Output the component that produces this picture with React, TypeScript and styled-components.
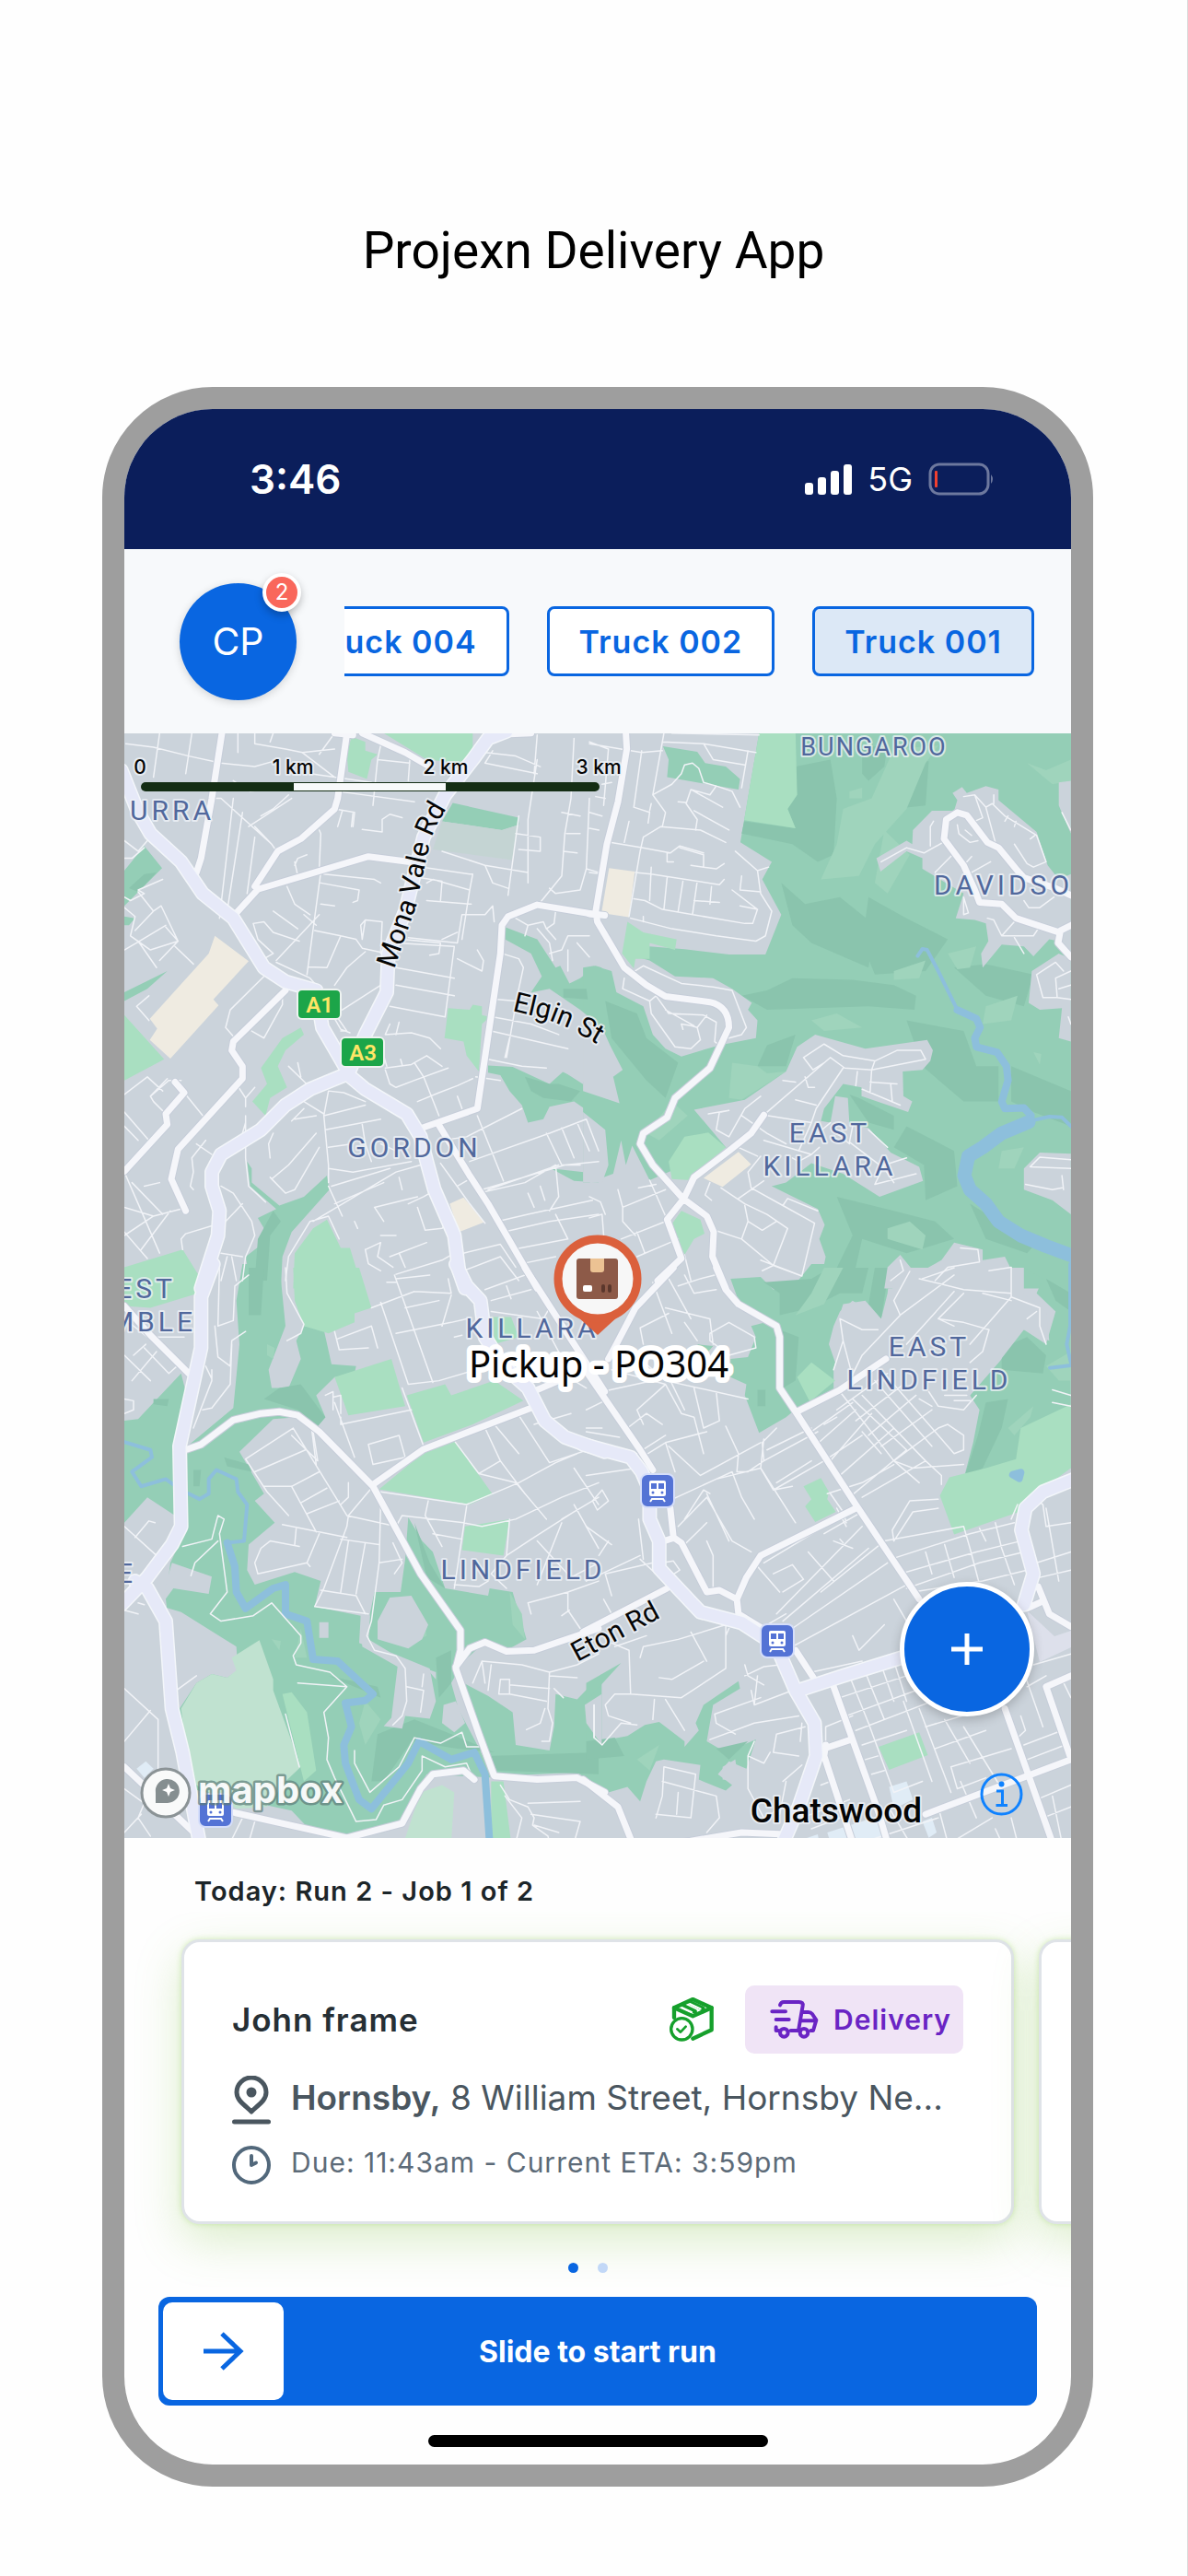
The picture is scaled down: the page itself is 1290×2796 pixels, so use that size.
import React, { useState } from "react";
import styled, { createGlobalStyle } from "styled-components";

const blue = "#0966e1";
const ui = `Inter, "Liberation Sans", sans-serif`;
const mapFont = `Roboto, "Liberation Sans", sans-serif`;

const GlobalStyle = createGlobalStyle`
  *, *::before, *::after { box-sizing: border-box; }
  body { margin: 0; background: #fefefe; font-family: ${ui}; }
  button { font: inherit; border: 0; padding: 0; margin: 0; cursor: pointer; }
  h1, h2, p { margin: 0; }
`;

const Page = styled.main`
  min-height: 100vh;
  padding: 232px 0 96px;
  border-right: 1px solid #dcdcdc;
  display: flex;
  flex-direction: column;
  gap: 108px;
`;

const Title = styled.h1`
  font-family: Roboto, "Liberation Sans", sans-serif;
  font-weight: 400;
  font-size: 55px;
  line-height: 80px;
  text-align: center;
  color: #000;
`;

const Phone = styled.section`
  margin: 0 102px 0 111px;
  border: 24px solid #9e9e9e;
  border-radius: 120px;
  overflow: hidden;
  background: #fefefe;
`;

const StatusBar = styled.div`
  height: 152px;
  padding: 0 82px 0 136px;
  background: #0b1e5b;
  color: #fff;
  display: flex;
  align-items: center;
  justify-content: space-between;
`;

const Clock = styled.span`
  font-size: 44px;
  font-weight: 600;
`;

const Signals = styled.div`
  display: flex;
  align-items: center;
  gap: 17px;
  font-size: 36px;
`;

const Header = styled.header`
  height: 200px;
  padding: 0 40px 0 60px;
  background: #f7f9fb;
  display: flex;
  align-items: center;
  gap: 52px;
`;

const AvatarButton = styled.button`
  position: relative;
  flex: none;
  width: 127px;
  height: 127px;
  border-radius: 50%;
  background: ${blue};
  color: #fff;
  font-size: 41px;
  box-shadow: 0 2px 10px rgba(0, 0, 0, 0.16);
`;

const Badge = styled.span`
  position: absolute;
  top: -11px;
  right: -5px;
  width: 42px;
  height: 42px;
  border: 4px solid #fff;
  border-radius: 50%;
  background: #f9675b;
  font-size: 24px;
  line-height: 34px;
  text-align: center;
  box-shadow: 0 4px 8px rgba(0, 0, 0, 0.25);
`;

const TruckStrip = styled.nav`
  flex: 1;
  min-width: 0;
  overflow: hidden;
  display: flex;
  justify-content: flex-end;
  gap: 41px;
`;

const TruckButton = styled.button<{ $selected: boolean }>`
  flex: none;
  height: 76px;
  padding: 0 32px;
  border: 3px solid ${blue};
  border-radius: 8px;
  background: ${(p) => (p.$selected ? "#dce8f6" : "#fff")};
  color: ${blue};
  font-size: 34px;
  font-weight: 600;
  letter-spacing: 1px;
  white-space: nowrap;
`;

const MapPane = styled.div`
  position: relative;
  background: #cbd3db;
`;

const MapSvg = styled.svg`
  display: block;
  width: 100%;
  height: auto;
`;

const AddButton = styled.button`
  position: absolute;
  right: 40px;
  bottom: 132px;
  width: 146px;
  height: 146px;
  border: 5px solid #fff;
  border-radius: 50%;
  background: ${blue};
  display: grid;
  place-items: center;
  box-shadow: 0 4px 12px rgba(0, 0, 0, 0.2);
`;

const InfoButton = styled.button`
  position: absolute;
  right: 52px;
  bottom: 24px;
  width: 47px;
  height: 47px;
  background: none;
`;

const Sheet = styled.section`
  padding: 36px 0 19px;
`;

const RunTitle = styled.h2`
  padding: 0 76px;
  font-size: 29px;
  line-height: 44px;
  font-weight: 600;
  letter-spacing: 1px;
  color: #1c2529;
`;

const Jobs = styled.div`
  display: flex;
  gap: 27px;
  overflow: hidden;
  padding: 30px 62px 68px;
`;

const JobCard = styled.article`
  flex: none;
  width: 100%;
  height: 309px;
  padding: 47px 52px 0;
  border: 3px solid #dfe3e8;
  border-radius: 20px;
  background: #fff;
  display: flex;
  flex-direction: column;
  box-shadow: 0 18px 50px rgba(130, 195, 70, 0.28), 0 0 6px rgba(150, 210, 90, 0.4);
`;

const CardTop = styled.div`
  display: flex;
  align-items: center;
  height: 74px;
`;

const Customer = styled.h2`
  flex: 1;
  font-size: 35px;
  font-weight: 600;
  letter-spacing: 1px;
  color: #262f35;
`;

const DeliveryTag = styled.span`
  display: flex;
  align-items: center;
  gap: 16px;
  height: 74px;
  margin-left: 34px;
  padding: 0 13px 0 27px;
  border-radius: 10px;
  background: #f0e4f6;
  color: #6a24c4;
  font-size: 30px;
  font-weight: 600;
  letter-spacing: 1px;
`;

const InfoRow = styled.div<{ $height: number; $color: string; $size: number }>`
  display: flex;
  align-items: center;
  gap: 22px;
  height: ${(p) => p.$height}px;
  color: ${(p) => p.$color};
  font-size: ${(p) => p.$size}px;
  letter-spacing: ${(p) => (p.$size > 32 ? 0 : 1)}px;
  white-space: nowrap;

  b { font-weight: 600; }
  p { padding-bottom: 6px; }
  svg { flex: none; }
`;

const Pager = styled.div`
  display: flex;
  justify-content: center;
  gap: 21px;
  margin-top: -26px;
  padding-right: 22px;
`;

const PagerDot = styled.button<{ $active: boolean }>`
  width: 11px;
  height: 11px;
  border-radius: 50%;
  background: ${(p) => (p.$active ? blue : "#c2d8f7")};
`;

const SlideControl = styled.label`
  display: grid;
  align-items: center;
  margin: 26px 37px 32px;
  height: 118px;
  border-radius: 12px;
  background: ${blue};

  & > * { grid-area: 1 / 1; }
`;

const SlideText = styled.span`
  justify-self: center;
  color: #fff;
  font-size: 32px;
  font-weight: 700;
`;

const SlideInput = styled.input`
  appearance: none;
  width: 100%;
  height: 118px;
  margin: 0;
  padding: 6px 5px;
  background: transparent;
  cursor: pointer;

  &::-webkit-slider-runnable-track { height: 106px; }
  &::-webkit-slider-thumb {
    appearance: none;
    width: 131px;
    height: 106px;
    border-radius: 10px;
    background: #fff;
  }
`;

const SlideArrow = styled.svg`
  margin-left: 48px;
  pointer-events: none;
`;

const HomeIndicator = styled.div`
  width: 369px;
  height: 13px;
  margin: 0 auto;
  border-radius: 7px;
  background: #000;
`;

/* ---------- map data: the area is split in four tiles, each with its own grid ---------- */

type Tile = "nw" | "ne" | "sw" | "se";
type Shapes = Record<Tile, string>;

const tileTransform: Record<Tile, string> = {
  nw: "translate(-5 -6) scale(.33333 .38265)",
  ne: "translate(505 -6) scale(.34439 .38265)",
  sw: "translate(-5 584) scale(.33333 .39541)",
  se: "translate(505 584) scale(.34439 .39541)",
};
const tiles: Tile[] = ["nw", "ne", "sw", "se"];

const forest: Shapes = {
  nw: `M15 405L80 335 138 398 15 505ZM1255 565L1360 600 1420 680 1435 675 1465 725 1500 710 1550 675 1570 680V860L1500 830 1420 770 1340 750 1375 705 1340 640 1255 600Z
    M1200 958L1280 962 1400 1010 1445 975 1570 1045V1115L1530 1090 1480 1060 1400 1075 1380 1110 1330 1120 1310 1070 1270 1030 1240 985 1200 978Z
    M415 1230L430 1250 430 1290 520 1355 600 1330 675 1270 683 1310 560 1430 530 1500 525 1590H430L410 1500 455 1470 470 1420 450 1390 510 1365 425 1300Z
    M1405 1250L1560 1265V1290L1480 1285ZM1085 213L1300 255V275L1245 290 1050 265ZM15 750L155 690 90 740 15 775ZM15 535L50 540 30 560 15 560Z`,
  ne: `M535 15H1530V1590H725L745 1500 725 1450 742 1410 720 1365 575 1300 575 1265 430 1190 190 1283 135 1185 115 1240 100 1170 75 1265 0 1290-20 1290V680L15 675 70 690 85 750 120 690 190 620 300 628 440 643H555L605 530 545 430 575 380 476 325Z
    M232 52L340 68 365 100 430 110 475 145 470 175 245 140 250 90Z`,
  sw: `M15 410L60 405 200 280 215 330 180 480 180 670 90 620 15 690Z
    M220 480L370 375 390 200 380 80 400-20H520L540 150 485 270 495 320 550 320 590 240 575 190 600 150 665 160 690 255 770 260 765 280 700 290 640 340 670 400 640 430 580 400 500 405 390 495 470 610 440 630 505 690 420 750 415 820 440 860 570 825 655 850 635 920 785 945 780 1020 900 1065 1010 1100 1090 1180 1140 1260 1220 1390 1000 1380 920 1500 860 1540 740 1550 605 1520 560 1480 230 1420 195 1200 150 900 165 800 220 700Z
    M830 880L915 880 930 790 940 675 985 740 1020 770 1060 870 1200 890 1205 870 1280 880 1325 1010 1260 1040 1190 1018 1120 1070 1080 1130 1100 1190 1030 1160 1030 1100 900 1060 810 1020 815 940Z
    M1120 1130L1200 1165 1280 1210 1290 1300 1400 1315 1415 1250 1420 1160 1490 1175 1570 1105V1420L1490 1375 1230 1385 1170 1270Z`,
  se: `M445 20L540 15 580 50 640 45 700-20H950L940 60 920 130 830 80 790 110 770 150 755 200 775 250 770 270 770 340 655 375 620 400 535 443 490 340 495 310 445 290 445 240 500 235 525 180 510 150 575 135 470 80Z
    M1370-10H1518V540L1180 570 1210 470 1230 380 1200 340 1300 240 1300 200 1370 160 1440 200 1470 110 1410 60 1430 20Z
    M-10 1255L30 1290 120 1275 175 1245 220 1237 300 1290 300 1305 345 1260 335 1240 360 1190 470 1125 475 1145 390 1190 370 1290 430 1320 525 1285 495 1365 440 1345 405 1380 450 1410 430 1425 345 1395 350 1355 235 1340 210 1345 180 1400 160 1455 120 1415 60 1430-10 1385ZM-10 1130L100 1075-10 1180ZM340 200L390 205 370 225Z`,
};

const clearing: Shapes = {
  nw: `M1290 760L1400 740 1500 800 1570 850V1030L1480 990 1400 960 1250 940Z`,
  ne: `M100 700L150 650 190 660 270 705 390 710 450 740 512 780 500 800 530 830 525 880 410 900 290 932 240 910 200 870 170 790 85 750Z
    M330 1083L490 1055 620 975 655 905 712 870 870 910 1065 885 1083 915 1075 945 1050 970 988 975 990 1045 1018 1060 1005 1090 858 1045 858 1020 800 1010 740 1080 730 1115 760 1120 775 1045 815 1050 820 1125 880 1135 950 1205 1040 1245 1052 1285 915 1330 800 1265 700 1235 620 1290 575 1300 430 1190Z
    M905 370L1000 320 1018 330 1020 290 1080 235 1150 235 1160 205 1145 185 1175 168 1190 185 1250 165 1290 175 1290 205 1410 295 1445 390 1480 430 1518 415V655L1480 605 1450 600 1400 648 1370 620 1300 615 1240 680 1235 640 1258 605 1250 555 1215 545 1155 540 1180 470 1050 400 1050 370 1000 350 918 408Z
    M1395 690L1480 640 1518 655V890L1480 880 1490 795 1420 800 1385 780ZM1480 155L1518 150V300L1480 220ZM1370 1250L1420 1205 1518 1208V1380L1460 1340 1370 1310Z
    M930 1590L940 1530 980 1495 1030 1550 1110 1510 1150 1460 1240 1480 1240 1510 1310 1500 1360 1590Z
    M-20 820L40 850 65 900 105 970 75 990 95 1065-20 1030ZM-20 1090L50 1140 60 1240 40 1290-20 1290Z`,
  sw: `M140 910L175 870 290 885 300 838 170 800 150 860ZM140 920L200 935 380 1030 385 1095 350 1115 300 1105 250 1130 195 1200 150 1100Z
    M840 960L880 895 950 890 1005 970 985 1010 940 1035 840 1010ZM785 940L815 945 810 1010 880 1045 1010 1090 1030 1180 1010 1228 930 1220 920 1255 860 1248 885 1225 905 1085 790 1030ZM1055 1190L1095 1180 1125 1240 1090 1265 1050 1240ZM1515 1190L1570 1160V1300L1520 1240ZM650 963H680V1006H650Z`,
  se: `M800 90L870 80 920 130 950 60 980-10H1370V60L1440 110 1450 190 1370 160 1290 250 1200 340 1000 300 790 280 760 200ZM1400 515L1475 480 1480 510 1430 545ZM420 1360L460 1340 470 1400 420 1395Z`,
};

const park: Shapes = {
  nw: `M860 15H1150V60L1110 100 1000 90ZM755 25L800 40 800 65 840 75 820 90 805 145 745 125 740 75ZM15 815L145 940 15 1000ZM590 850L600 870 540 915 515 960 545 1020 490 1050 475 1100 432 1060 480 1010 460 965 530 880Z
    M1070 795L1140 800 1150 785 1180 790 1180 815 1205 820 1180 840 1170 975 1130 930 1120 890 1058 880ZM15 1530L205 1480 255 1550V1590H15ZM565 1590L570 1490 630 1420 675 1395 720 1475 750 1475 790 1590Z`,
  ne: `M535 15H650L655 190 625 230 650 285 488 262 505 170ZM120 550L170 580 275 600 270 630 190 610 190 655 145 655 140 683 103 640ZM430 1190L320 1283 260 1280 250 1230 300 1160 375 1148ZM290 1370L350 1395 363 1435 330 1450 300 1495 258 1410Z`,
  sw: `M565-10H780L820 100 765 115 765 140 680 170 600 150 570 80ZM15-10H235L255 60 100 100 15 95ZM700 290L885 240 930 370 745 395ZM935 340L1060 310 1080 340 1220 300 1315 355 1150 420 990 470ZM845 598L1000 490 1090 465 1215 612 1140 640ZM1125 700L1270 680 1250 780 1115 765ZM530 1160L560 1155 610 1210 640 1370 600 1400ZM1210 1400L1250 1400 1275 1568H1210ZM1215 125L1275 125 1300 180 1220 200Z`,
  se: `M1135 565L1250 540 1345 515 1360 430 1518 365V540L1440 590 1355 660 1150 722 1105 615ZM655 290L700 250 775 300 695 358ZM675 590L730 567 755 605 750 625 777 660 712 688 680 645 700 625ZM912 1305L1040 1265 1067 1328 945 1368Z`,
};

const golf: Shapes = {
  nw: "",
  ne: "",
  sw: "M200 1200L250 1130 300 1105 350 1115 380 1095 365 1060 455 1012 500 1120 500 1150 590 1360 540 1400 480 1470 380 1475 230 1400ZM925 1568L980 1430 1050 1410 1090 1430 1080 1568Z",
  se: "",
};

const cemetery: Shapes = {
  nw: "M1050 265L1245 290 1300 275 1280 375 1020 345Z",
  ne: "",
  sw: "",
  se: "",
};

const school: Shapes = {
  nw: "M310 590L420 662 305 770 322 787 165 938 98 885 122 853 98 825 290 640ZM1075 1350L1120 1332 1188 1402 1105 1430Z",
  ne: "M62 398L143 408 125 537 38 525ZM470 1203L510 1238 420 1302 360 1277Z",
  sw: "",
  se: "",
};

const shade: Shapes = {
  nw: `M1445 740L1520 740 1525 770 1445 765ZM1320 990L1400 1010 1430 1010 1500 1030 1470 1060 1380 1050 1340 1030ZM500 1370L525 1400 490 1440 480 1568H440L450 1450ZM30 455L80 415 120 410 60 465Z`,
  ne: `M650 110L760 90 780 200 770 360 720 380 640 330 480 300 488 265 650 285 625 230 655 190ZM605 440L680 500 790 480 900 560 880 680 700 610 640 560Z
    M480 760L560 745 640 710 830 715 960 730 1030 760 1025 800 880 790 560 800ZM880 480L1000 540 1130 600 1060 690 900 700 860 610ZM50 775L150 810 180 880 280 950 240 1050 180 1000 70 880Z
    M1000 830L1180 860 1220 960 1290 960 1290 1060 1180 1060 1050 960ZM1330 960L1518 1030V1130L1400 1090 1330 1060ZM1000 1130L1150 1200 1160 1300 1060 1340 1055 1240 960 1190ZM780 1330L960 1370 1090 1400 1150 1450 1000 1490 860 1450 830 1568H760L830 1440ZM1150 680L1250 670 1400 700 1370 790 1250 760ZM860 60L940 45 930 110 880 150 860 130ZM1000 90L1070 95 1060 220 960 230ZM560 900L650 870 620 960 530 960ZM1200 1350L1290 1400 1420 1450 1380 1490 1250 1450ZM820 1040L850 1050 960 1100 960 1140 880 1120ZM730 565L750 600 730 620 710 600Z`,
  sw: `M420-10H470L460 120 420 120ZM520 320L590 310 670 400 640 430 580 380 470 350ZM240 545L265 545 260 590 240 590ZM340 510L420 530 430 550 350 535ZM840 1270L960 1230 1080 1270 1220 1320 1100 1310 950 1290 860 1400 820 1400ZM1200 1330L1560 1320V1380L1230 1370ZM680 1110L840 1140 850 1170ZM1030 1060L1080 1040 1080 1130 1040 1170ZM960 690L1010 800 1060 870 1000 840ZM110 350L160 350 155 370 110 365ZM1125 345L1170 350 1165 370 1125 360ZM390 1270L412 1275V1325L390 1310Z`,
  se: `M550 30L700 20 760-10H880L860 60 790 60 700 100 600 120 600 60ZM900-10H945L920 130 880 90ZM1440 20L1518 60V110L1470 80ZM1300 210L1380 180 1440 230 1430 280 1300 270ZM1250 360L1320 350 1300 430 1240 540 1180 570 1225 450ZM530 325H555V370H530ZM600 160L660 180 650 300 610 320ZM-10 1290L80 1280 110 1330-10 1340ZM400 1310L500 1290 440 1340Z`,
};

const highlight: Shapes = {
  nw: "",
  ne: `M800 230L890 200 960 60 1100 50 1060 100 1000 230 900 330 850 420 730 430 780 330ZM1380 100L1440 120 1518 90V150L1460 160ZM960 690L1060 660 1040 710 960 715ZM450 950L530 960 560 980 620 975 480 1055 440 1050ZM930 290L1010 360 940 470 900 440ZM1130 640L1220 620 1200 680 1160 685ZM1300 1200L1370 1190 1340 1250 1290 1250ZM260 1060L310 1100 220 1170 180 1150ZM700 830L780 810 860 850 740 860ZM1250 790L1350 760 1330 830 1240 840ZM820 180L860 170 860 200 820 200ZM940 1420L1010 1400 1060 1440 1050 1480 940 1450ZM1400 920L1425 925 1420 955Z`,
  sw: `M480 200L505 210 500 240 480 230ZM590 980L610 1060 570 1060ZM1270 880L1310 940 1320 1010 1280 970ZM800 1180L850 1230 800 1300 780 1240ZM495 1010L525 1015 520 1040ZM900 960L990 950 1000 1000 930 1030 870 1010Z`,
  se: `M740-10H800L740 90 650 120 700 60ZM1320 430L1400 370 1390 400 1340 450ZM1440 260L1518 220V300L1480 300ZM1200 590L1240 560 1230 600 1200 615ZM150 1340L220 1300 190 1370Z`,
};

const streets: Shapes = {
  nw: `M20 45L110 55 225 80 330 100 440 110 500 95M130 15L110 140M235 15L215 130M385 15V70M440 15V45L540 60 595 70 700 140M500 15L490 40M650 75L700 15M595 70L700 60M620 130L700 140 820 155M850 50L840 90 945 100M840 90L825 220M945 90L940 150M710 180L960 210M760 240L755 280M700 230L765 240 760 280M725 235L710 280M790 288L855 295 855 260 880 245 920 255M650 290L655 300 650 400M655 410L610 700M665 415L830 430 850 440M655 440L780 460 775 490 760 495M655 500L700 505M635 575L720 590 770 600 790 625 870 640M720 590L675 680 615 678M800 635L740 680 700 730M790 600L800 545 855 550 850 640M800 545L785 560 790 600M925 570L920 600 1045 610 1040 640 1010 645M1050 600L1100 580M370 200L325 540M400 240L350 520M310 200L330 200 495 330 515 355M420 280L560 200M460 250L500 230 550 190M495 330L440 280M440 310L415 470M370 150L425 180 480 175M570 390L580 370 610 360M570 380L580 420M545 450L570 500 620 530M500 520L580 570M435 555L470 550 500 580 585 605M435 555L450 600 500 640M650 530L510 660M500 640L460 660M510 665L620 710 640 730M600 530L640 560M15 480L35 490 80 470 60 460 140 430M60 465L110 520M15 510L50 535 35 590 100 630 190 605 135 505 110 520 50 575M15 630L55 610 150 560M60 605L120 680M150 565L190 605 130 660M180 620L240 670M15 320L60 350 90 320M15 370L40 370 80 340M95 760L55 790 95 830M470 705L360 800 345 850M345 850L375 880M530 760V785L470 880 430 860M725 800L850 730M900 730L1090 760M880 790L1060 820M900 680L1090 710M900 610L1090 620 1060 820M940 595L1100 610 1115 530M1100 655L1180 690 1185 660 1165 630M1115 530L1190 530 1215 505 1220 550M1140 460L1115 600M945 390L1140 415 1150 415 1140 460 1020 430 1000 440M945 420L1050 435 1045 490M1000 490L1145 500M1050 350L1190 390 1215 440 1265 455M1190 390L1330 410M1300 250L1265 475M1360 90L1330 260 1330 440M1215 65L1190 100 1360 130M1190 70L1290 80 1370 110M1360 20L1350 130M1480 30L1470 200 1450 300 1440 420 1370 495M1440 240L1500 250M1455 300L1500 300M1445 350L1490 355M1530 200L1520 400 1500 460 1420 470 1400 455M1520 400L1560 410M1300 345L1370 350 1370 310 1290 300M1290 540L1330 560 1380 550 1390 570 1420 600M1330 560L1320 590M1420 520L1415 555 1390 570M1360 570L1400 610 1410 660M1400 640L1440 630 1460 590 1530 590M1460 630L1460 690M1490 610L1530 650M1245 640L1300 655 1315 680 1295 760 1275 860 1260 935M1230 770L1290 775M1215 820L1340 840 1430 870M1210 860L1310 880 1460 910M1200 940L1310 960 1390 965M1270 880L1255 935M865 965L950 955 1000 930 1050 960M880 840L865 870 950 865 1010 880 1045 910M910 835L900 870M960 950L990 990 1040 1100M865 970L880 1010 900 1020 960 1000 1070 965M970 1060L1040 1035 1100 1015 1150 995M915 940L920 955M1100 1045L1115 1080M1240 1000L1160 990M870 960L860 930M720 860L740 860 700 810M750 865L720 855 690 810M665 1100L680 1030 730 1035 800 1060M665 1095L600 1060M640 1100L570 1110M665 1100L800 1070M670 1140L850 1110M680 1190L760 1180M665 1100L680 1240 680 1290M680 1300L725 1385M680 1250L760 1260 950 1230M790 1125L800 1180 820 1230M850 1180L900 1200M690 1300L880 1250M700 1350L860 1290M630 1400L900 1260 980 1240M910 1275L920 1310M580 950L590 990M550 960L585 990 620 1020M560 1115L600 1080M500 1150L485 1180 490 1220M490 1275L540 1320 570 1310 650 1190M495 1280L550 1240 640 1150M410 1100V1220L420 1300 475 1345M410 1120L400 1150M380 1010L410 1050 440 1020M410 1050L410 1075M210 1035L275 1105M155 995L100 1045 110 1060 150 1095M15 1040L90 990 140 1030M100 1045L160 1000 200 1000M15 1130L60 1170M15 1090L95 1170M280 1170L235 1220 240 1260 230 1300 240 1310M250 1180L300 1210M15 1260L130 1490M40 1290L140 1380M15 1360L110 1385 220 1360M80 1300L130 1290M15 1430L90 1505M15 1440L110 1385M70 1480L165 1370M330 1300L370 1320 430 1400 440 1440 410 1500 400 1568M330 1490L400 1500M345 1400L400 1350M205 1480L200 1450 215 1435 310 1410M350 1500L330 1568M365 1500L380 1568M540 1568L550 1500 620 1400 680 1385 715 1450M765 1400L775 1420M800 1480L850 1460 840 1500 890 1530M800 1480L810 1520 850 1540M850 1440L900 1440M860 1400L830 1360 970 1330M970 1360L995 1425 1050 1420 1080 1390M940 1350L990 1330 1030 1310M880 1500L1000 1460M910 1490L930 1530M900 1550L1050 1510 1090 1490M1165 1100L1250 1285M1050 1170L1130 1160 1310 1080M1140 1230L1400 1150 1520 1110M1200 1310L1430 1240M1180 1310L1450 1240 1560 1230M1390 1150L1440 1240 1500 1240M1440 1135L1480 1220M1490 1120L1530 1200M1520 1110L1560 1200M1170 1320L1320 1290 1420 1240 1430 1330 1400 1370M1330 1320L1350 1360M1370 1300L1385 1340M1230 1400L1330 1380 1540 1340M1250 1430L1400 1400 1560 1380M1280 1480L1460 1450 1420 1380M1310 1520L1420 1500M1045 1235L1140 1350 1190 1405M1130 1285L1100 1300M1120 1490L1240 1465 1290 1530M1120 1540L1240 1500 1300 1568`,
  ne: `M0 45L165 70 230 65M235 15L200 190 260 160 290 130 300 105 325 100 345 115 360 155 400 165 450 180 475 225M230 40L360 45 525 70M260 15L535 20M360 45L390 90 490 105M500 65L480 170M165 65L140 225 190 240 185 270M200 190L240 240 230 280M190 235L195 215M400 165L380 190 320 175 305 215 340 260 335 290M320 175L420 225M280 210L305 212M330 235L440 290M170 310L225 280 350 290 430 325M170 310L160 350 125 535M110 325L125 265M65 325L165 340 255 355 285 335 360 355M245 355V380L265 380M285 340L360 360V395L320 390M360 395L400 400 425 385M460 350L530 405 565 395M530 405L540 470 575 520 555 590 525 605 400 590 260 570 130 540M480 420L475 460 540 465M475 505L530 515 515 555 490 555 230 515 175 490 140 485M530 515L450 460M145 410L195 415 410 445 425 430M195 395L190 490M245 425L235 515M295 435L280 520M340 435L325 530M385 450L380 500M330 490L410 495M40 160L70 155M0 240L40 250M0 285L30 290M20 195L50 200M0 40L60 60M60 60L45 220M0 410L45 415M170 535V550M135 695L170 675 290 725 390 735 450 745 495 850 480 870 440 880M110 710L105 740 190 775 210 760 250 810 360 815 400 835 395 890 410 900M190 775L195 810 270 905 320 910 350 885 340 850 320 845 290 840M340 850L370 815M240 800L330 845M290 840L295 855M590 200M675 935L740 897 800 930 900 945 970 915 1045 915 1060 940 890 970 805 965 760 935 550 1098M675 935L705 970 740 950M800 965L715 1080 700 1120M845 975L840 1015M890 970L885 1035M885 1005L970 1010M900 945L890 970M860 1025L980 1070M950 1010L955 1060M610 1000L650 1005M680 990L690 1020 710 1020M650 1055L715 1070M550 1098L700 1120 660 1200M540 1045L490 1080 440 1160 400 1140 410 1090M375 1095L440 1085 415 1090M480 1100L560 1150 620 1180M520 1130L470 1190 530 1215M550 1170L700 1210 725 1190M830 1130L820 1175 930 1250 960 1290M880 1140L940 1190M900 1295L930 1240 1000 1220M900 1295L1030 1265M820 1180L780 1150M720 1150L760 1120M700 1210L660 1230 640 1220M380 1290L365 1325 385 1340M415 1305L490 1350 560 1380 625 1420 580 1525M540 1215L500 1260 510 1305 610 1355 710 1405 670 1555M610 1355L625 1335 720 1370M490 1355L500 1400 480 1450M500 1400L545 1425 590 1400M470 1335L550 1285M395 1425L480 1450 580 1525 545 1540M580 1525L670 1555 540 1510M90 1310L105 1360 240 1310M105 1360V1400L145 1440M155 1305L210 1295M190 1283L245 1395M0 1330L35 1345 50 1380M0 1390L40 1380 45 1440M150 1430L175 1490M100 1450L240 1400M150 1500L280 1450M300 1495L320 1568M1180 195L1215 190 1250 225 1280 325 1255 325M1250 225L1270 215 1310 250 1410 305 1440 380 1400 395 1380 385 1340 330M1310 265L1320 250M1340 280L1345 265M1390 315L1405 305M1275 190V215M1215 190L1240 255 1215 265M920 380L1000 340 1055 355 1125 320M1085 265L1075 280V335M1160 275L1165 300 1200 325 1225 320M1185 290L1205 305M1090 410L1145 360M1180 390L1205 365M1205 410L1265 380M1180 480V530L1195 525 1180 480M1255 540L1275 545 1300 590 1345 545M1300 590L1400 590 1415 570M1340 595L1370 640M1370 490L1385 510 1420 510 1465 480M1490 240L1518 290M1518 690L1470 710 1475 765 1518 770M1480 740L1518 730M1410 700L1470 665 1495 690M1410 700L1430 765 1475 765M1510 820L1518 840M1390 1245L1420 1218 1518 1225M1390 1245L1518 1250M1375 1295L1460 1310 1490 1305M1490 1270L1495 1310M1170 1475L1225 1480 1230 1515 1130 1530 1090 1568M980 1510L990 1540 950 1568M1260 1540L1330 1530`,
  sw: `M325-10L320 150 370 135 375 40 420 10M310 150L320 235 360 260 365 190 410 165M370 135L320 150M300 270V300L240 430M280 260L300 295M365 200L360 310 300 375 270 380M15 130L90 180 210 180M15 230L100 300M40 300L120 220M80 210L160 280 200 250M15 350L45 355V380L15 390M85 200L45 230M540-10L545 60 600 145 590 170 545 190M700 165L715 215 810 210M710 185L820 150 840 210M820 100L960 55M850 85L940 310M895 10L1020 305M900 20L1010 10M930 100L1040 80M900 170L1080 140 1130 130M960 55L1080 60 1070 20M1080 65L1050 150M1090 180L1115 175M870 30L900 30M1190 50L1320 10M1260 40L1275 75M1210 80L1340 50M1210 110L1380 130 1400 100M1360 110L1480 300 1520 320M920 320L990 480M940 310L1040 300 1200 260M950 380L720 420 720 400M695 345L720 340 720 390M670 340L695 330 695 380M700 360L765 510M630 440L645 520 560 450M625 430L640 530M410 515L565 430 740 670M410 515L480 605 550 670M440 550L605 490M470 590L560 590 650 550M560 590L640 715M590 635L675 595M610 665L715 630M530 695L740 730M575 705L570 750M650 720L610 800 450 830 440 800 460 760 490 740 585 755M610 800L620 810M825 590L745 670 740 700 665 870 635 920 810 940M740 670L900 700 920 670 1120 690M850 645L845 800 820 960 805 1000 830 1040 900 1055 930 1090 935 1180 920 1220 890 1245M720 735L845 750M745 740L720 880M800 745L770 885M655 875L770 890 800 940M745 580L745 620 720 640M850 605L1130 640 1300 580 1420 525 1490 500M1005 630L995 670 1050 755M1130 645L1090 870M1020 720L1115 735M810 475L825 530 930 510 910 450 810 475M890 745L920 800 895 830M845 800L920 790M1090 465L1170 555 1240 520 1190 430M1240 520L1320 610M1170 555L1290 580 1390 680M1220 420L1300 500M1300 395L1400 525 1560 480M1480 540L1560 640M1350 420L1470 390M1120 690L1180 700 1290 680 1440 620 1560 580M1440 690L1360 860M1270 680L1260 780 1350 730 1480 660M1480 640L1560 760M1440 680L1560 620M1360 740L1470 840 1560 800M1330 910L1340 940M1330 910L1460 880 1560 850M1460 880V930L1500 980M1440 945L1465 930M1260 780L1210 830 1260 870M1090 860L1170 865 1200 850M1150 1130L1180 1070 1310 1080M1180 1070L1190 1130M1210 1080L1200 1150M1310 1080L1400 1100 1490 1080 1560 1050M1240 1120L1270 1120 1270 1160 1235 1160ZM1270 1135L1400 1145M1270 1160L1390 1180M1400 1100L1395 1200 1410 1240 1400 1290 1375 1290M1385 1200L1370 1240 1325 1258M1415 1145L1445 1170M1400 1110L1490 1115M1545 1190L1545 1280M935 1140L990 1150 980 1210M990 1105L985 1140M250 1110L185 1150M15 1145L125 1230V1380M15 1290L100 1205M15 1420L80 1460 60 1500 100 1550M70 1490L15 1540M15 700L120 780M50 730L95 685 115 690M60 910L80 915M15 930L60 940M440 1510L420 1568M360 1568L400 1500M240 1500L270 1520M1255 1440L1310 1500 1290 1568M1330 1460L1500 1455M1340 1490L1500 1510 1480 1568M1350 1500L1345 1520 1395 1550 1400 1568M1350 1520L1430 1540M1240 1410L1270 1450 1330 1470 1350 1500M540 1215L585 1360M205 755L300 735 320 670 340 680 325 720 350 880 295 940 330 960 435 945 495 910 590 1000 590 1020 565 1055 575 1080 685 1100 740 1140 665 1210 680 1280 675 1340 700 1390 770 1510 835 1505 860 1465 920 1450 985 1370 985 1330 1060 1360 1130 1350 1150 1390M232 835L245 800 320 740M580 1130L740 1140M765 1315V1350L815 1430 910 1360 960 1280 1045 1295 1115 1265 1130 1305 1170 1305`,
  se: `M300 10L330 60 400 50M280 40L350 20 395 10M200 30L260 170M160 155L250 115M160 155L170 200M240 100L380 130 390 200M380 170L440 140 520 180 525 210 440 230 380 190ZM300 140L340 190M250 20L320 130M120 210L240 300 500 350M120 250L250 220M70 270L240 310M40 330L250 290M150 380L240 310 290 390 330 400 360 500M120 430L180 390 230 420M240 310L150 380 170 420M250 290L300 380M330 320L360 430 410 410 400 330M430 425L470 500 465 550 500 550 550 520 545 470 590 430M185 500L240 470 370 440M240 470L270 550M250 480L350 560 540 470M150 500L240 450M-10 440L95 455M-10 430L40 430M-10 380L60 350M-10 560L150 540M10 630L40 600 60 630 25 655ZM-10 700L70 750M250 630L400 570 540 540 550 460M400 570L450 550 480 620 520 680M280 700L370 620 450 740 510 770M300 680L360 600 380 610M370 610L440 740M370 740L390 780V870M300 750L370 690M540 540L580 600 640 590M540 540L650 690M580 600L740 520 860 450M550 520L720 440M590 580L700 520M560 490L700 430M700 440L830 360M710 480L840 380M760 520L890 390M790 560L960 430M820 620L1000 490M860 620L1060 520M740 420L780 400M790 330L960 520 1040 580M830 350L1000 490M860 340L1060 520 1110 560V585M900 300L1080 480M930 280L1150 500 1180 490 1180 450 1130 420 1100 430M960 520L1020 540 1180 530M860 440L920 500M940 280L780 380M990 310L840 410M1030 340L880 450M1080 380L920 480M1100 430L960 520M750 610L860 580 960 530M760 610L800 660 810 690M780 650L810 700M740 720L860 660M690 770L770 850M580 830L640 805 675 845 610 880M520 800L600 880M590 940L860 700M610 960L880 760M640 980L940 800M550 800L740 700M730 880L930 740M770 740L830 760M790 735L800 745M960 740L955 710 1010 630 1100 625M960 740L1020 660 1100 650M930 740L1180 700 1200 760 1230 860M950 790L1200 720 1340 690M980 830L1220 770 1360 740M1000 870L1230 800 1370 770M1020 880L1240 850 1380 820M1060 770L1080 830M1120 750L1150 840M1230 705L1250 740M1280 690L1300 760 1340 860M1330 680L1350 640M640 1030L1000 860M560 970L620 940M700 1100L860 1070M830 1000L850 1040 930 970M960 900L1000 960M790 130L800 190 770 270M790 130L860 160 910 160M800 190L830 290M960 80L980 120 860 230 820 300M960 80L1010 0M980 120L1150 10M1050 20L1150 -10M1040 20L1180 50 1330 60M1150 55L1000 200M1180 60L1100 130 1150 150M1330 -10V70L1250 150 1200 200M1330 70L1420 100M1100 130L1180 140 1260 160 1240 220 1200 250M1420 100L1420 150 1440 200M1380 130L1410 110M1070 330L1100 370 1180 380 1220 340M1120 340H1190M1150 355H1200M1040 350L1080 370M1240 60L1330 80M1460 325L1518 340M1460 360L1518 370M155 680L170 790M30 780L60 740M50 830L200 800M50 830L70 890M-10 850L160 780M160 790L235 850M230 800L265 795 285 820 250 840M45 900L70 940M80 1030L180 1000M125 1040L130 1160 290 1170 430 1090 430 970M125 1040L70 1020M160 1060L170 1030 280 1010 430 970M220 1115L260 1120 360 1070M130 1160L80 1160 50 1190 60 1220 130 1240M205 1175L200 1230M240 1175L300 1260M150 1245L100 1240 40 1300 15 1280V1190M320 990L370 1070M430 1000L440 980M490 1080L500 1110 550 1135M490 1110L550 1085 600 1080M530 1110L520 1190 640 1150M510 1150L520 1190M395 1215L540 1170M380 1285L520 1240 660 1220M590 1270L680 1250M590 1270L580 1320 660 1330M670 1240L665 1290M395 1215L400 1240 460 1270M520 1290L500 1330 500 1420 550 1500M500 1330L550 1350 570 1320M620 1400L600 1490M610 1400L670 1355M560 1500L600 1470 670 1490M235 1360L230 1440 210 1500M235 1360L335 1380 320 1500 210 1490M280 1430L275 1490M230 1400L400 1440 410 1500 370 1540M745 1250L830 1220M745 1250V1300M790 1170L1000 1110M810 1220L1030 1150M840 1260L1080 1180M860 1300L1000 1260M870 1340L910 1330M890 1380L930 1370M730 1410L760 1400M820 1110L880 1240 960 1430M870 1100L930 1230M920 1080L960 1180M960 1070L1000 1180M990 1180L1080 1400M1040 1200L1140 1430M1060 1250L1290 1190M1090 1310L1250 1260M1140 1360L1330 1310M1140 1360L1160 1420 1250 1390M1170 1400L1220 1500M1180 1250L1300 1420M1120 1230L1200 1350M1370 1100L1430 1250M1400 1080L1518 1050M1380 1140L1440 1110M1360 1220L1375 1260 1350 1280M1370 1300L1490 1260M1380 1340L1500 1300M1490 1120L1518 1170M1410 1450L1518 1410M1430 1500L1518 1470M1330 1500L1350 1568M1460 1440L1490 1568M1280 1530L1300 1568M670 1500L820 1450M700 1530L850 1480M950 1480L1010 1568M1100 1470L1130 1568M860 1568L1100 1500M1140 1568L1270 1500M960 1430L1050 1400M700 1090L640 1030M1400 620L1430 640 1440 700 1518 690M1410 800L1518 770M1420 840L1518 820M1440 650L1480 850`,
};

const roads: Shapes = {
  nw: `M333 15L300 200 265 370 250 410M740 15L710 200 700 230 590 315 515 350 440 450M380 525L450 458 810 365 945 380M790 15L930 70 1000 105M540 745L370 890 365 915 400 960 400 995 190 1195 168 1280 215 1370M15 1258L155 1125 150 1095 210 1035 180 1005M1580 532L1540 528 1360 502 1265 535 1245 560 1240 640 1165 1080 985 1135M1035 1120L1140 1270 1200 1350 1360 1590M700 15L760 20M1200 20L1340 15`,
  ne: `M115 15L118 60 90 210 55 330 20 520 25 550 110 680 180 730 240 762 380 778Q440 790 440 850L380 965 270 1050 245 1105 170 1150 160 1180 200 1240 295 1335 370 1385 392 1430 388 1500 430 1590M550 1098L510 1150 440 1200 330 1275 298 1335 245 1395 290 1505 215 1568M0 528L20 530
    M1518 475L1470 455 1370 425 1345 400 1290 340 1255 325 1190 248 1160 240 1125 260 1118 315 1180 390 1215 460 1230 495 1300 500 1345 540 1480 580M1530 555L1485 575 1478 610 1518 650`,
  sw: `M15 95L100 175 225 280M220 488L265 475 370 408 460 390 520 385 580 395 650 440 825 590 980 830 1110 985 1110 1040 1095 1090 1170 1270 1220 1385 1360 1395 1490 1390 1580 1430M825 585L990 488 1340 375M1095 1085L1140 1035 1190 1018 1260 1043 1350 1040 1560 980M1320-10L1580 330M1155 1395L1120 1370 1020 1380 980 1420 920 1515 740 1555 370 1485M15 1360L260 1555M1360 325L1430 300`,
  se: `M265-10L145 100 85 200 60 240M400-10L430 50 470 90 590 150 600 180 600 320 650 385 840 640 1040 900M655 385L790 325 935 240M-20 262L160 490 200 545M255 650L265 730 290 745 370 880 410 875 465 900 470 940 555 985M650 1040L710 1120M465 900L495 840 540 780 840 650M235 740L265 732M-20 990L245 870M770 1140L910 1480 940 1568M745 1300L740 1330 830 1568M740 1310L825 1285M1310 1200L1460 1568M1060 1490L1518 1340M1380 925L1430 905M1415 865L1450 940 1518 975M1440 1140L1518 1110M1440 1140L1515 1330M-20 1395L90 1470 135 1568M290 1568L480 1540 620 1545`,
};

const highways: Shapes = {
  nw: `M5 120L60 240 100 300 200 380 270 470 370 540 470 680 540 720 640 745 660 850 740 970M1260 10L1200 30 1150 90 1060 190 990 310 930 520 875 640 870 750 800 870 745 980 620 1025 540 1070 460 1140 330 1210 300 1260 300 1300 325 1370 320 1440 265 1590M745 985L800 1025 935 1095 980 1160 1000 1230 1025 1310 1090 1440 1105 1540 1125 1590`,
  ne: "",
  sw: `M305-20L265 70 265 210 195 480 200 700 170 750 90 840 5 915M1095-20L1130 40 1175 80 1190 180 1250 260 1330 320 1385 410 1450 455 1580 495M50 850L90 870 150 960 170 1200 205 1320 260 1568`,
  se: `M-20 475L130 510 165 550 190 600 190 680 220 740 220 815 350 935 480 965 560 1010 600 1050 650 1150 710 1240 715 1330 660 1470 605 1580M660 1150L800 1110 985 1060M1530 570L1430 605 1375 650 1362 710 1400 830 1370 915`,
};

const creek: Shapes = {
  nw: "",
  ne: "M1035 647L1050 627 1065 630 1100 690 1160 800M1390 1115L1450 1103 1490 1105 1518 1130",
  sw: "M15 468L100 490 105 510 40 550 70 590 150 570 175 585M225 610L260 625 290 610 290 570 315 545 380 570 385 605 415 640 405 740 350 745",
  se: "M1516-20L1516 150 1505 200 1518 250M1452 265L1518 258",
};

const river: Shapes = {
  nw: "",
  ne: "M1160 800L1220 825 1232 850 1215 880 1220 905 1285 920 1315 960 1320 1000 1300 1060 1310 1080 1370 1078 1393 1100 1385 1125 1300 1150",
  sw: "M350 745L375 810 380 880 410 925 500 870 540 860 540 940 610 960 630 1065 710 1070 825 1160 800 1178 735 1185 755 1250 730 1300 735 1350 780 1450 820 1475 940 1350 975 1290 1080 1340 1155 1320 1190 1380 1205 1568",
  se: "M1335 558L1360 552 1355 568Z",
};

const wideRiver: Shapes = {
  nw: "",
  ne: "M1385 1118L1300 1150 1240 1190 1195 1215 1182 1270 1200 1310 1250 1350 1290 1400 1360 1440 1440 1470 1530 1500",
  sw: "",
  se: "",
};

const buildings: Shapes = {
  nw: "",
  ne: "",
  sw: "M55 1365L85 1345 110 1365 80 1390Z",
  se: "M945 1415L1000 1400 1020 1450 960 1475ZM750 1540L930 1490 945 1568H760ZM1050 1510L1080 1500 1095 1540 1070 1555ZM670 1560L720 1545 725 1568H670Z",
};

function Areas({ shapes, fill }: { shapes: Shapes; fill: string }) {
  return (
    <g fill={fill}>
      {tiles.map((t) => <path key={t} transform={tileTransform[t]} d={shapes[t]} />)}
    </g>
  );
}

function Lines({ shapes, stroke, width }: { shapes: Shapes; stroke: string; width: number }) {
  return (
    <g fill="none" stroke={stroke} strokeWidth={width} strokeLinejoin="round" strokeLinecap="round">
      {tiles.map((t) => (
        <path key={t} transform={tileTransform[t]} d={shapes[t]} vectorEffect="non-scaling-stroke" />
      ))}
    </g>
  );
}

type LabelKind = "suburb" | "reserve" | "road" | "town" | "job" | "scale";

const labelFont: Record<LabelKind, { size: number; weight: number; tracking: number; family: string }> = {
  suburb: { size: 30, weight: 400, tracking: 4, family: mapFont },
  reserve: { size: 27, weight: 400, tracking: 2, family: mapFont },
  road: { size: 30, weight: 400, tracking: 0, family: mapFont },
  town: { size: 37, weight: 500, tracking: 0, family: mapFont },
  job: { size: 40, weight: 400, tracking: 0, family: `"Noto Sans", sans-serif` },
  scale: { size: 21, weight: 500, tracking: 0, family: ui },
};

const MapText = styled.text<{ $kind: LabelKind }>`
  font-family: ${(p) => labelFont[p.$kind].family};
  font-size: ${(p) => labelFont[p.$kind].size}px;
  font-weight: ${(p) => labelFont[p.$kind].weight};
  letter-spacing: ${(p) => labelFont[p.$kind].tracking}px;
  fill: ${(p) => (p.$kind === "suburb" || p.$kind === "reserve" ? "#51689c" : "#050505")};
  stroke: ${(p) => (p.$kind === "job" ? "#fff" : "rgba(238, 242, 247, 0.75)")};
  stroke-width: ${(p) => (p.$kind === "job" ? 12 : 4)}px;
  stroke-linejoin: round;
  paint-order: stroke;
`;

const areaNames: { text: string; x: number; y: number; anchor?: "start" | "end"; kind?: LabelKind }[] = [
  { text: "URRA", x: 6, y: 94, anchor: "start" },
  { text: "GORDON", x: 315, y: 460 },
  { text: "BUNGAROO", x: 814, y: 24, kind: "reserve" },
  { text: "DAVIDSO", x: 879, y: 175, anchor: "start" },
  { text: "EAST", x: 766, y: 444 },
  { text: "KILLARA", x: 766, y: 480 },
  { text: "KILLARA", x: 443, y: 656 },
  { text: "EAST", x: 874, y: 676 },
  { text: "LINDFIELD", x: 874, y: 712 },
  { text: "LINDFIELD", x: 433, y: 918 },
  { text: "EST", x: 56, y: 613, anchor: "end" },
  { text: "MBLE", x: 78, y: 649, anchor: "end" },
  { text: "E", x: 13, y: 922, anchor: "end" },
];

function Shield({ x, y, name }: { x: number; y: number; name: string }) {
  return (
    <g transform={`translate(${x} ${y})`}>
      <rect width="47" height="32" rx="5" fill="#1ca549" stroke="#eef3f1" strokeWidth="2" />
      <text x="24" y="25" textAnchor="middle" fill="#ffe566" fontFamily={mapFont} fontWeight="600" fontSize="24">{name}</text>
    </g>
  );
}

function Station({ x, y }: { x: number; y: number }) {
  return (
    <g transform={`translate(${x} ${y})`}>
      <rect width="36" height="36" rx="7" fill="#5473d5" stroke="#d5defa" strokeWidth="2" />
      <rect x="9" y="7" width="18" height="17" rx="2" fill="#fff" />
      <path d="M11 10h6v6h-6zM19 10h6v6h-6z" fill="#5473d5" />
      <circle cx="13" cy="20" r="1.5" fill="#5473d5" />
      <circle cx="23" cy="20" r="1.5" fill="#5473d5" />
      <path d="M10 30l2-3h12l2 3" fill="none" stroke="#fff" strokeWidth="2" />
    </g>
  );
}

function MapDrawing() {
  return (
    <MapSvg viewBox="0 0 1028 1199" role="img" aria-label="Map of Killara and surrounding suburbs">
      <rect width="1028" height="1199" fill="#cbd3db" />
      <Areas shapes={forest} fill="#94ceb6" />
      <Areas shapes={shade} fill="#8ac4ad" />
      <Areas shapes={highlight} fill="#9fd4bc" />
      <Areas shapes={clearing} fill="#cbd3db" />
      <Areas shapes={golf} fill="#c0e2d0" />
      <Areas shapes={cemetery} fill="#c4d4d3" />
      <Areas shapes={park} fill="#a9dfc1" />
      <Areas shapes={school} fill="#efebe1" />
      <Areas shapes={buildings} fill="#e0ecf6" />
      <path d="M980 952l30 28 18-6v18l-34 16z" fill="#dde0eb" />
      <Lines shapes={creek} stroke="#8dbfdc" width={4} />
      <Lines shapes={river} stroke="#8dbfdc" width={8} />
      <Lines shapes={wideRiver} stroke="#8dbfdc" width={15} />
      <Lines shapes={streets} stroke="#f1f3f7" width={1.5} />
      <Lines shapes={roads} stroke="#c6cdd9" width={9} />
      <Lines shapes={roads} stroke="#f5f6fa" width={7} />
      <Lines shapes={highways} stroke="#f3f6fa" width={16} />
      <Lines shapes={highways} stroke="#e6e9f8" width={13} />

      {areaNames.map((s, i) => (
        <MapText key={i} $kind={s.kind ?? "suburb"} x={s.x} y={s.y} textAnchor={s.anchor ?? "middle"}>{s.text}</MapText>
      ))}
      <path id="mona-vale" d="M293 256L316 190 333 114 340 98 368 50" fill="none" />
      <path id="elgin" d="M421 301L455 309 483 320 530 347" fill="none" />
      <path id="eton" d="M492 1008L598 951" fill="none" />
      <MapText $kind="road"><textPath href="#mona-vale">Mona Vale Rd</textPath></MapText>
      <MapText $kind="road"><textPath href="#elgin">Elgin St</textPath></MapText>
      <MapText $kind="road"><textPath href="#eton">Eton Rd</textPath></MapText>
      <MapText $kind="town" x="773" y="1182" textAnchor="middle">Chatswood</MapText>

      <Shield x={188} y={278} name="A1" />
      <Shield x={235} y={330} name="A3" />
      <Station x={561} y={804} />
      <Station x={691} y={967} />
      <Station x={81} y={1151} />

      <path d="M23 58H511" stroke="#142d14" strokeWidth="10" strokeLinecap="round" />
      <path d="M184 58H349" stroke="#f8fafa" strokeWidth="8" />
      {["0", "1 km", "2 km", "3 km"].map((label, i) => (
        <MapText key={label} $kind="scale" x={17 + i * 166} y="44" textAnchor="middle">{label}</MapText>
      ))}

      <circle cx="45" cy="1150" r="26" fill="#f9fafa" stroke="#8b9396" strokeWidth="3" />
      <path d="M34 1161V1150A13 13 0 1 1 47 1161Z" fill="#858e90" />
      <path d="M48 1140l2 5 5 2-5 2-2 5-2-5-5-2 5-2z" fill="#fff" />
      <text x="80" y="1161" fontFamily={ui} fontWeight="700" fontSize="40" fill="#fff" fillOpacity="0.95"
        stroke="#5d7b78" strokeOpacity="0.7" strokeWidth="5" strokeLinejoin="round" paintOrder="stroke">mapbox</text>

      <path d="M514 653L491 632H537Z" fill="#db603c" />
      <circle cx="514" cy="592" r="43" fill="#f7f7f7" stroke="#db603c" strokeWidth="9" />
      <rect x="491" y="570" width="45" height="44" rx="3" fill="#8d5a48" />
      <path d="M506 570h15v12q0 3-3 3h-9q-3 0-3-3z" fill="#ecc293" />
      <rect x="498" y="599" width="10" height="7" rx="2" fill="#fff" />
      <path d="M520 600v5M527 600v5" stroke="#5b372c" strokeWidth="4" strokeLinecap="round" />
      <MapText $kind="job" x="515" y="699" textAnchor="middle">Pickup - PO304</MapText>
    </MapSvg>
  );
}

/* ---------- icons ---------- */

const SignalIcon = () => (
  <svg width="51" height="33" viewBox="0 0 51 33" fill="#fff" aria-hidden="true">
    <rect y="20" width="9" height="13" rx="3" />
    <rect x="14" y="14" width="9" height="19" rx="3" />
    <rect x="28" y="7" width="9" height="26" rx="3" />
    <rect x="42" width="9" height="33" rx="3" />
  </svg>
);

const BatteryIcon = () => (
  <svg width="73" height="36" viewBox="0 0 73 36" fill="none" aria-hidden="true">
    <rect x="2" y="2" width="63" height="32" rx="10" stroke="#6d789e" strokeWidth="3" />
    <rect x="7" y="9" width="3" height="18" rx="1" fill="#f0402f" />
    <path d="M68 13q4 5 0 10z" fill="#6d789e" />
  </svg>
);

const PackageIcon = () => (
  <svg width="48" height="48" viewBox="142 202 144 144" fill="none" stroke="#16a02c" strokeLinejoin="round" strokeLinecap="round" aria-hidden="true">
    <path d="M157 268V236L218 208 279 236V308L218 336" strokeWidth="13" />
    <path d="M157 236L218 263 279 236" strokeWidth="13" />
    <path d="M186 230L224 248M212 220L250 238" strokeWidth="15" />
    <path d="M182 235L214 250M208 223L243 239" stroke="#fff" strokeWidth="6" />
    <circle cx="182" cy="305" r="35" fill="#fff" strokeWidth="10" />
    <path d="M167 305L178 315 195 297" strokeWidth="8" />
  </svg>
);

const TruckIcon = () => (
  <svg width="53" height="44" viewBox="467 209 159 132" fill="none" stroke="#6a24c4" strokeLinejoin="round" strokeLinecap="round" strokeWidth="12" aria-hidden="true">
    <path d="M500 228Q503 218 512 218H562Q576 218 574 230L560 311H535" />
    <path d="M474 249H518M487 275H529M487 300V311H495" />
    <path d="M572 251H592Q600 251 605 257L618 277 608 311H600M567 279H617" />
    <circle cx="513" cy="318" r="13" />
    <circle cx="578" cy="318" r="13" />
  </svg>
);

const PlaceIcon = () => (
  <svg width="42" height="53" viewBox="0 0 42 53" fill="none" stroke="#4a565f" strokeWidth="5" strokeLinecap="round" strokeLinejoin="round" aria-hidden="true">
    <path d="M21 39C14 32 5 27 5 18A16 16 0 0 1 37 18C37 27 28 32 21 39Z" />
    <circle cx="21" cy="18" r="5.5" fill="#4a565f" stroke="none" />
    <path d="M2.5 50H39.500" />
  </svg>
);

const TimeIcon = () => (
  <svg width="42" height="42" viewBox="0 0 42 42" fill="none" stroke="#52687b" strokeWidth="4" strokeLinecap="round" strokeLinejoin="round" aria-hidden="true">
    <circle cx="21" cy="21" r="19" />
    <path d="M21 11V21L26 18.500" />
  </svg>
);

const trucks = ["Truck 004", "Truck 002", "Truck 001"];

export default function App() {
  const [truck, setTruck] = useState("Truck 001");
  const [page, setPage] = useState(0);

  return (
    <>
      <GlobalStyle />
      <Page>
        <Title>Projexn Delivery App</Title>
        <Phone>
          <StatusBar>
            <Clock>3:46</Clock>
            <Signals>
              <SignalIcon />
              <span>5G</span>
              <BatteryIcon />
            </Signals>
          </StatusBar>

          <Header>
            <AvatarButton type="button">
              CP
              <Badge>2</Badge>
            </AvatarButton>
            <TruckStrip aria-label="Trucks">
              {trucks.map((name) => (
                <TruckButton key={name} type="button" $selected={name === truck} aria-pressed={name === truck} onClick={() => setTruck(name)}>
                  {name}
                </TruckButton>
              ))}
            </TruckStrip>
          </Header>

          <MapPane>
            <MapDrawing />
            <AddButton type="button" aria-label="Add">
              <svg width="36" height="36" viewBox="0 0 36 36" stroke="#fff" strokeWidth="5" aria-hidden="true">
                <path d="M18 1V35M1 18H35" />
              </svg>
            </AddButton>
            <InfoButton type="button" aria-label="Map information">
              <svg width="47" height="47" viewBox="0 0 47 47" fill="none" stroke="#0f82ff" strokeWidth="3" aria-hidden="true">
                <circle cx="23.5" cy="23.5" r="21.500" />
                <path d="M18 20H24.500V35M17.500 35.500H30" />
                <circle cx="23.500" cy="12.500" r="3" fill="#0f82ff" stroke="none" />
              </svg>
            </InfoButton>
          </MapPane>

          <Sheet>
            <RunTitle>Today: Run 2 - Job 1 of 2</RunTitle>
            <Jobs>
              <JobCard>
                <CardTop>
                  <Customer>John frame</Customer>
                  <PackageIcon />
                  <DeliveryTag>
                    <TruckIcon />
                    Delivery
                  </DeliveryTag>
                </CardTop>
                <InfoRow $height={100} $size={37} $color="#4a565f">
                  <PlaceIcon />
                  <p><b>Hornsby,</b> 8 William Street, Hornsby Ne...</p>
                </InfoRow>
                <InfoRow $height={42} $size={30} $color="#5d6b78">
                  <TimeIcon />
                  <p>Due: 11:43am - Current ETA: 3:59pm</p>
                </InfoRow>
              </JobCard>
              <JobCard aria-hidden="true" />
            </Jobs>
            <Pager>
              {[0, 1].map((i) => (
                <PagerDot key={i} type="button" $active={i === page} aria-label={`Job ${i + 1}`} onClick={() => setPage(i)} />
              ))}
            </Pager>
            <SlideControl>
              <SlideText>Slide to start run</SlideText>
              <SlideInput type="range" min={0} max={100} defaultValue={0} />
              <SlideArrow width="45" height="42" viewBox="0 0 45 42" fill="none" stroke={blue} strokeWidth="5" aria-hidden="true">
                <path d="M1 21H41M21 2L41 21 21 40" />
              </SlideArrow>
            </SlideControl>
            <HomeIndicator />
          </Sheet>
        </Phone>
      </Page>
    </>
  );
}
